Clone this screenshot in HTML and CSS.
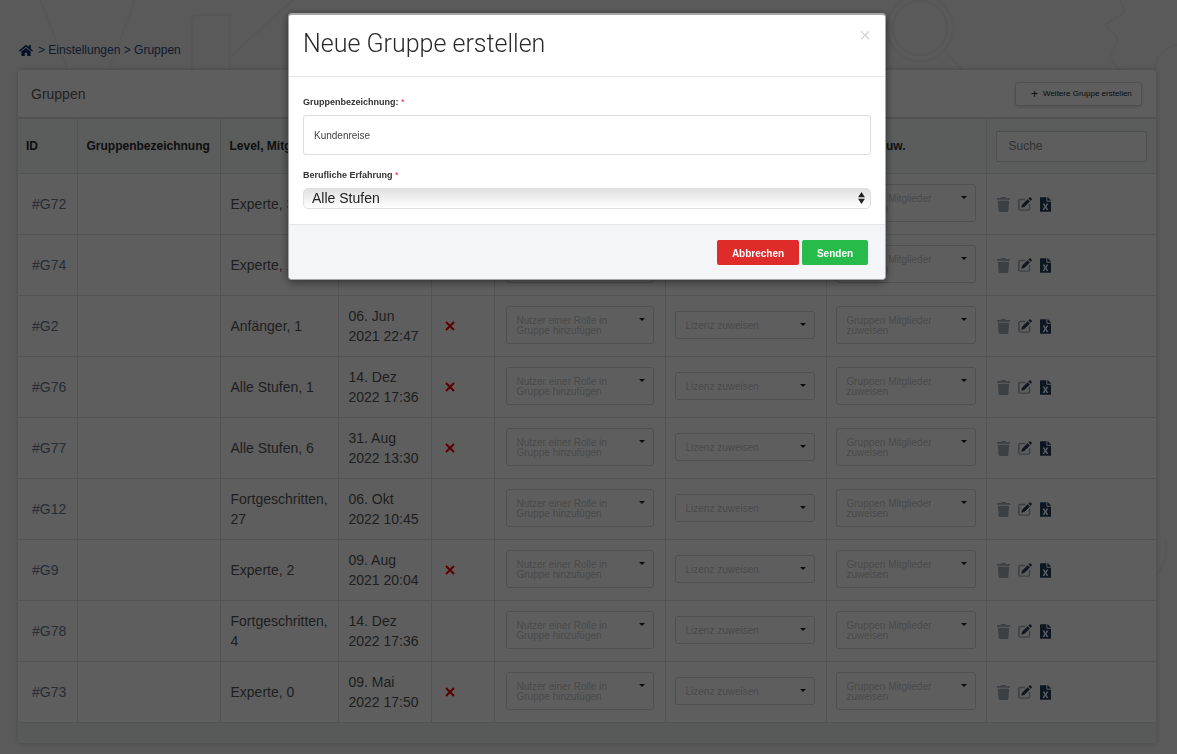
FILE: index.html
```html
<!DOCTYPE html>
<html lang="de">
<head>
<meta charset="utf-8">
<title>Gruppen</title>
<link rel="stylesheet" href="styles.css">
</head>
<body>
<svg class="decor" viewBox="0 0 1177 754" width="1177" height="754" fill="none">
  <path d="M40 0 L67 67 M135 0 L110 67 M192 70 V20 Q192 15 200 15 H230 V70 M293 0 L230 57"/>
  <circle cx="920" cy="28" r="33"/><circle cx="920" cy="28" r="27"/>
  <path d="M945 52 L962 70 M1120 0 L1125 12 L1105 25 L1118 38 L1110 60 L1120 70 M1177 45 Q1150 50 1155 90 M1165 540 Q1170 560 1156 575"/>
</svg>

<nav class="crumbs">
  <svg class="home" viewBox="0 0 576 512"><path d="M280.37 148.26L96 300.11V464a16 16 0 0 0 16 16l112.06-.29a16 16 0 0 0 15.92-16V368a16 16 0 0 1 16-16h64a16 16 0 0 1 16 16v95.64a16 16 0 0 0 16 16.05L464 480a16 16 0 0 0 16-16V300L295.67 148.26a12.19 12.19 0 0 0-15.3 0zM571.6 251.47L488 182.56V44.05a12 12 0 0 0-12-12h-56a12 12 0 0 0-12 12v72.61L318.47 43a48 48 0 0 0-61 0L4.34 251.47a12 12 0 0 0-1.6 16.9l25.5 31A12 12 0 0 0 45.15 301l235.22-193.74a12.19 12.19 0 0 1 15.3 0L530.9 301a12 12 0 0 0 16.9-1.6l25.5-31a12 12 0 0 0-1.7-16.93z"/></svg>
  <span>&gt; Einstellungen &gt; Gruppen</span>
</nav>

<main class="card">
  <header class="card-head">
    <h2>Gruppen</h2>
    <button class="add-btn"><span class="plus">+</span>Weitere Gruppe erstellen</button>
  </header>
  <table>
    <colgroup>
      <col class="c1"><col class="c2"><col class="c3"><col class="c4"><col class="c5"><col class="c6"><col class="c7"><col class="c8"><col class="c9">
    </colgroup>
    <thead>
      <tr>
        <th>ID</th><th class="wide">Gruppenbezeichnung</th><th>Level, Mitglieder</th><th>Erstellt</th><th>Aktiv</th><th>Rolle</th><th>Lizenz</th><th class="assign">Mitgl. zuw.</th>
        <th><input class="search" placeholder="Suche"></th>
      </tr>
    </thead>
    <tbody id="rows"></tbody>
  </table>
  <div class="card-foot"></div>
</main>

<div class="overlay"></div>

<section class="modal">
  <div class="modal-head">
    <h1>Neue Gruppe erstellen</h1>
    <span class="close">×</span>
  </div>
  <form class="modal-body">
    <label class="lbl lbl-first">Gruppenbezeichnung: <em>*</em></label>
    <input class="txt" value="Kundenreise">
    <label class="lbl lbl-second">Berufliche Erfahrung <em>*</em></label>
    <div class="sel-wrap">
      <select class="sel"><option>Alle Stufen</option></select>
      <svg class="sel-arrows" viewBox="0 0 8 14"><path d="M4 0 L8 6 H0 Z M0 8 H8 L4 14 Z"/></svg>
    </div>
  </form>
  <div class="modal-foot">
    <button class="btn red">Abbrechen</button>
    <button class="btn green">Senden</button>
  </div>
</section>

<script src="app.js"></script>
</body>
</html>
```

FILE: app.js
```js
var data = [
  ["#G72", "Experte, 3", "06. Jun<br>2021 22:47", true],
  ["#G74", "Experte, 1", "14. Dez<br>2022 17:36", true],
  ["#G2", "Anfänger, 1", "06. Jun<br>2021 22:47", true],
  ["#G76", "Alle Stufen, 1", "14. Dez<br>2022 17:36", true],
  ["#G77", "Alle Stufen, 6", "31. Aug<br>2022 13:30", true],
  ["#G12", "Fortgeschritten, 27", "06. Okt<br>2022 10:45", false],
  ["#G9", "Experte, 2", "09. Aug<br>2021 20:04", true],
  ["#G78", "Fortgeschritten, 4", "14. Dez<br>2022 17:36", false],
  ["#G73", "Experte, 0", "09. Mai<br>2022 17:50", true]
];
var icons =
  '<svg class="ic trash" viewBox="0 0 448 512"><path d="M432 32H312l-9.4-18.7A24 24 0 0 0 281.1 0H166.8a23.72 23.72 0 0 0-21.4 13.3L136 32H16A16 16 0 0 0 0 48v32a16 16 0 0 0 16 16h416a16 16 0 0 0 16-16V48a16 16 0 0 0-16-16zM53.2 467a48 48 0 0 0 47.9 45h245.8a48 48 0 0 0 47.9-45L416 128H32z"/></svg>' +
  '<svg class="ic edit" viewBox="0 0 16 16"><path class="box" d="M8.5 2.8H2.5A1.5 1.5 0 0 0 1 4.3v9.2A1.5 1.5 0 0 0 2.5 15h9.2a1.5 1.5 0 0 0 1.5-1.5V8" fill="none" stroke-width="1.7"/><path d="M13 .5a1 1 0 0 1 1.4 0l1.2 1.2a1 1 0 0 1 0 1.4l-1.2 1.2-2.6-2.6zM11 2.5l2.6 2.6-6.4 6.4-3.4.8.8-3.4z"/></svg>' +
  '<svg class="ic file" viewBox="0 0 384 512"><path d="M224 136V0H24C10.7 0 0 10.7 0 24v464c0 13.3 10.7 24 24 24h336c13.3 0 24-10.7 24-24V160H248c-13.2 0-24-10.8-24-24zm60.1 106.5L224 336l60.1 93.5c5.1 8-.6 18.5-10.1 18.5h-34.9c-4.4 0-8.5-2.4-10.6-6.3C208.9 405.5 192 373 192 373c-6.1 14.1-9.5 19.1-36.6 68.8-2.1 3.9-6.1 6.3-10.5 6.3H110c-9.5 0-15.2-10.5-10.1-18.5l60.3-93.5-60.3-93.5c-5.2-8 .6-18.5 10.1-18.5h34.8c4.4 0 8.5 2.4 10.6 6.3 26.1 48.8 20 33.6 36.6 68.5 0 0 6.1-11.7 36.6-68.5 2.1-3.9 6.2-6.3 10.6-6.3H274c9.5-.1 15.2 10.4 10.1 18.4zM384 121.9v6.1H256V0h6.1c6.4 0 12.5 2.5 17 7l97.9 98c4.5 4.5 7 10.6 7 16.9z"/></svg>';
function dd(text, cls) {
  return '<div class="dd ' + cls + '"><span>' + text + '</span><i class="caret"></i></div>';
}
document.getElementById("rows").innerHTML = data.map(function (r) {
  return '<tr><td class="id">' + r[0] + '</td><td></td><td>' + r[1] + '</td><td>' + r[2] + '</td>' +
    '<td class="x">' + (r[3] ? '<svg class="cross" viewBox="0 0 10 10"><path d="M1 1 L9 9 M9 1 L1 9"/></svg>' : '') + '</td>' +
    '<td class="role">' + dd('Nutzer einer Rolle in Gruppe hinzufügen', 'tall') + '</td>' +
    '<td class="pick">' + dd('Lizenz zuweisen', 'low') + '</td>' +
    '<td class="pick">' + dd('Gruppen Mitglieder zuweisen', 'tall narrow') + '</td>' +
    '<td class="acts">' + icons + '</td></tr>';
}).join("");
```

FILE: styles.css
```css
* { box-sizing: border-box; }
html, body { margin: 0; height: 754px; overflow: hidden; }
body {
  background: #f5f5f5;
  font-family: "Liberation Sans", Arial, sans-serif;
  color: #4f4f4f;
  position: relative;
}
.decor { position: absolute; left: 0; top: 0; stroke: #ebebeb; stroke-width: 2.5; }

.crumbs {
  position: relative;
  height: 70px;
  padding: 43px 0 0 19px;
  display: flex;
  align-items: flex-start;
  gap: 5px;
  font-size: 12px;
  line-height: 14px;
  color: #2f4a80;
}
.home { width: 14px; height: 13px; fill: #12306e; margin-top: 1px; }

.card {
  position: relative;
  width: 1138px;
  margin-left: 18px;
  background: #fff;
  border-radius: 3px;
  box-shadow: 0 0 6px rgba(0, 0, 0, .2);
}
.card-head {
  height: 48px;
  display: flex;
  align-items: center;
  justify-content: space-between;
  padding: 0 14px 0 13px;
  border-bottom: 1px solid #ddd;
}
.card-head h2 { margin: 0; font-size: 14px; font-weight: 400; color: #5c5c5c; }
.add-btn {
  width: 127px;
  height: 24px;
  padding: 0 0 0 15px;
  display: flex;
  align-items: center;
  background: #fff;
  border: 1px solid #d5d5d5;
  border-radius: 3px;
  box-shadow: 0 1px 3px rgba(0, 0, 0, .15);
  font: 8px "Liberation Sans", Arial, sans-serif;
  color: #222;
  white-space: nowrap;
}
.plus { font-size: 12px; margin-right: 5px; line-height: 1; }

table { width: 1138px; table-layout: fixed; border-collapse: collapse; }
.c1 { width: 59px; } .c2 { width: 143px; } .c3 { width: 118px; } .c4 { width: 93px; }
.c5 { width: 63px; } .c6 { width: 171px; } .c7 { width: 161px; } .c8 { width: 160px; } .c9 { width: 170px; }
th, td { border: 1px solid #e2e2e2; padding: 0 10px; overflow: hidden; }
tr > :first-child { border-left: 0; }
tr > :last-child { border-right: 0; }
thead tr { height: 55px; background: #f4fbf8; }
th { font-size: 12px; font-weight: 700; text-align: left; color: #2b2b2b; white-space: nowrap; padding-left: 9px; }
th:first-child { padding-left: 8px; }
th.assign { text-align: right; padding-right: 80px; }
th:last-child { padding: 0 9px; }
.search {
  width: 151px;
  height: 31px;
  padding: 0 12px;
  border: 1px solid #d3d3d3;
  border-radius: 2px;
  background: #fff;
  font: 12px "Liberation Sans", Arial, sans-serif;
  display: block;
}
.search::placeholder { color: #8a8a8a; }

tbody tr { height: 61px; }
td { font-size: 14px; line-height: 20px; color: #555; }
td.id { padding-left: 14px; color: #6a7a8c; }
td.x { padding-left: 13px; }
td.role { padding: 0 0 2px 11px; }
td.pick { padding: 0 0 2px 9px; }
.cross { width: 10px; height: 10px; stroke: #f00000; stroke-width: 2; fill: none; display: block; }

.dd {
  position: relative;
  border: 1px solid #d8d8d8;
  border-radius: 3px;
  padding: 2px 30px 0 10px;
  font-size: 10px;
  line-height: 10px;
  color: #cacaca;
  display: flex;
  align-items: center;
  background: #fff;
}
.tall { width: 148px; height: 38px; }
.low { width: 140px; height: 28px; }
.narrow { width: 140px; }
.caret {
  position: absolute;
  right: 8px;
  top: 11px;
  border: 3px solid transparent;
  border-top-color: #222;
  border-bottom: 0;
}

.acts { padding: 0 0 2px 10px; }
.ic { height: 15px; display: inline-block; vertical-align: middle; }
.trash { width: 13px; fill: #a4adb6; margin-right: 8px; }
.edit { width: 14px; height: 14px; fill: #2e3e52; margin-right: 8px; }
.edit .box { stroke: #a4adb6; }
.file { width: 11px; fill: #253f60; }

.card-foot { height: 20px; background: #ecf3ef; }

.overlay { position: fixed; inset: 0; background: rgba(0, 0, 0, .63); }

.modal {
  position: fixed;
  left: 288px;
  top: 13px;
  width: 598px;
  height: 267px;
  background: #fff;
  border: 1px solid #a5a5a5;
  border-top-width: 2px;
  border-radius: 4px;
  box-shadow: 0 2px 8px rgba(0, 0, 0, .5);
  display: flex;
  flex-direction: column;
}
.modal-head {
  height: 62px;
  flex: none;
  padding: 0 14px;
  display: flex;
  align-items: flex-start;
  justify-content: space-between;
  border-bottom: 1px solid #e6e6e6;
}
.modal-head h1 {
  margin: 14px 0 0;
  font: 300 25px/30px Roboto, "Liberation Sans", sans-serif;
  color: #2a2a2a;
}
.close { font-size: 20px; line-height: 19px; color: #d4d8dc; margin-top: 11px; font-family: "Liberation Sans", sans-serif; }
.modal-body { flex: 1; padding: 20px 14px 0; display: flex; flex-direction: column; align-items: flex-start; }
.lbl { font-size: 9px; line-height: 11px; font-weight: 700; color: #333; }
.lbl em { color: #e03030; font-style: normal; font-weight: 400; }
.lbl-second { margin-top: 15px; }
.txt {
  width: 568px;
  height: 40px;
  margin-top: 7px;
  padding: 0 10px;
  border: 1px solid #dcdcdc;
  border-radius: 3px;
  font: 10px "Liberation Sans", Arial, sans-serif;
  color: #444;
}
.sel-wrap { position: relative; width: 568px; height: 21px; margin-top: 7px; }
.sel {
  appearance: none;
  width: 100%;
  height: 21px;
  padding: 0 8px 2px;
  border: 1px solid #e0e0e0;
  border-radius: 5px;
  background: linear-gradient(#e0e0e0, #f6f6f6 70%, #ffffff);
  font: 14px "Liberation Sans", Arial, sans-serif;
  color: #222;
  display: block;
}
.sel-arrows { position: absolute; right: 6px; top: 4px; width: 7px; height: 12px; fill: #222; }
.modal-foot {
  height: 55px;
  flex: none;
  background: #f4f5f8;
  border-top: 1px solid #e6e6e6;
  padding: 15px 17px 0 0;
  display: flex;
  justify-content: flex-end;
  gap: 3px;
  border-radius: 0 0 4px 4px;
}
.btn {
  height: 25px;
  padding: 1px 0 0;
  border: 0;
  border-radius: 2px;
  color: #fff;
  font: 700 10px "Liberation Sans", Arial, sans-serif;
}
.red { width: 82px; background: #e02b2b; }
.green { width: 66px; background: #26bb4a; }
```
